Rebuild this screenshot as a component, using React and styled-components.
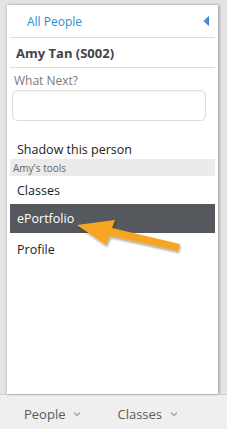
import React from "react";
import styled, { createGlobalStyle } from "styled-components";

const GlobalStyle = createGlobalStyle`
  html, body {
    margin: 0;
    padding: 0;
    height: 100%;
  }
  body {
    font-family: "Open Sans", "Liberation Sans", sans-serif;
    background: #e4e4e4;
  }
  #root {
    height: 100%;
  }
`;

const Page = styled.div`
  height: 429px;
  display: flex;
  flex-direction: column;
`;

const Stage = styled.div`
  flex: 1;
  display: flex;
  padding: 5px 9px 0 7px;
  min-height: 0;
`;

const Panel = styled.div`
  flex: 1;
  background: #fff;
  box-shadow: 0 0 3px rgba(0, 0, 0, 0.25), 2px 0 2px rgba(0, 0, 0, 0.15);
  padding: 0 3px;
  display: flex;
  flex-direction: column;
  position: relative;
`;

const Header = styled.div`
  height: 32px;
  display: flex;
  align-items: center;
  justify-content: space-between;
  padding: 0 6px 0 17px;
  border-bottom: 1px solid #dcdcdc;
`;

const BackLink = styled.span`
  font-size: 12px;
  color: #2a8fd2;
`;

const Name = styled.div`
  height: 29px;
  display: flex;
  align-items: center;
  padding-left: 6px;
  font-size: 13px;
  font-weight: 700;
  color: #444;
  border-bottom: 1px solid #dcdcdc;
`;

const Label = styled.div`
  font-size: 12px;
  color: #7a7a7a;
  padding: 4px 0 0 4px;
  line-height: 17px;
`;

const NextInput = styled.div`
  height: 29px;
  margin: 1px 9px 0 2px;
  border: 1px solid #dedede;
  border-radius: 5px;
  box-shadow: inset 0 1px 2px rgba(0, 0, 0, 0.06);
`;

const Item = styled.div`
  height: ${(p) => p.$h || 28}px;
  display: flex;
  align-items: center;
  padding-left: 7px;
  font-size: 12.5px;
  color: ${(p) => (p.$active ? "#fff" : "#222")};
  background: ${(p) => (p.$active ? "#55595d" : "transparent")};
`;

const Band = styled.div`
  height: 17px;
  display: flex;
  align-items: center;
  padding-left: 3px;
  font-size: 10px;
  color: #666;
  background: #ebebeb;
`;

const Spacer = styled.div`
  height: ${(p) => p.$h}px;
`;

const Pointer = styled.svg`
  position: absolute;
  left: 63px;
  top: 210px;
  overflow: visible;
`;

const Footer = styled.div`
  height: 35px;
  box-sizing: border-box;
  background: #efefef;
  border-top: 1px solid #d2d2d2;
  display: flex;
  align-items: center;
  padding: 4px 0 0 24px;
  gap: 36px;
`;

const Tab = styled.span`
  display: flex;
  align-items: center;
  gap: 8px;
  font-size: 13px;
  color: #5a5a5a;
`;

const Chevron = () => (
  <svg width="8" height="6" viewBox="0 0 8 6">
    <path d="M1 1.5 L4 4.5 L7 1.5" fill="none" stroke="#aaa" strokeWidth="1.6" />
  </svg>
);

const Triangle = () => (
  <svg width="6" height="10" viewBox="0 0 6 10">
    <defs>
      <linearGradient id="tg" x1="0" y1="0" x2="1" y2="0">
        <stop offset="0" stopColor="#7aaee8" />
        <stop offset="1" stopColor="#2f78d0" />
      </linearGradient>
    </defs>
    <path d="M6 0 L0 5 L6 10 Z" fill="url(#tg)" />
  </svg>
);

export default function App() {
  return (
    <>
      <GlobalStyle />
      <Page>
        <Stage>
          <Panel>
            <Header>
              <BackLink>All People</BackLink>
              <Triangle />
            </Header>
            <Name>Amy Tan (S002)</Name>
            <Label>What Next?</Label>
            <NextInput />
            <Spacer $h={18} />
            <Item $h={20}>Shadow this person</Item>
            <Band>Amy's tools</Band>
            <Item>Classes</Item>
            <Item $active $h={29}>ePortfolio</Item>
            <Item $h={32}>Profile</Item>
            <Pointer width="120" height="40">
              <defs>
                <filter id="sh" x="-20%" y="-20%" width="140%" height="160%">
                  <feDropShadow dx="1" dy="2" stdDeviation="1.2" floodColor="#000" floodOpacity="0.35" />
                </filter>
              </defs>
              <path
                d="M7 10 L45 5 L42 13 L110 29 L108 36 L40 21 L36 30 Z"
                fill="#f6a623"
                filter="url(#sh)"
              />
            </Pointer>
          </Panel>
        </Stage>
        <Footer>
          <Tab>
            People <Chevron />
          </Tab>
          <Tab>
            Classes <Chevron />
          </Tab>
        </Footer>
      </Page>
    </>
  );
}
